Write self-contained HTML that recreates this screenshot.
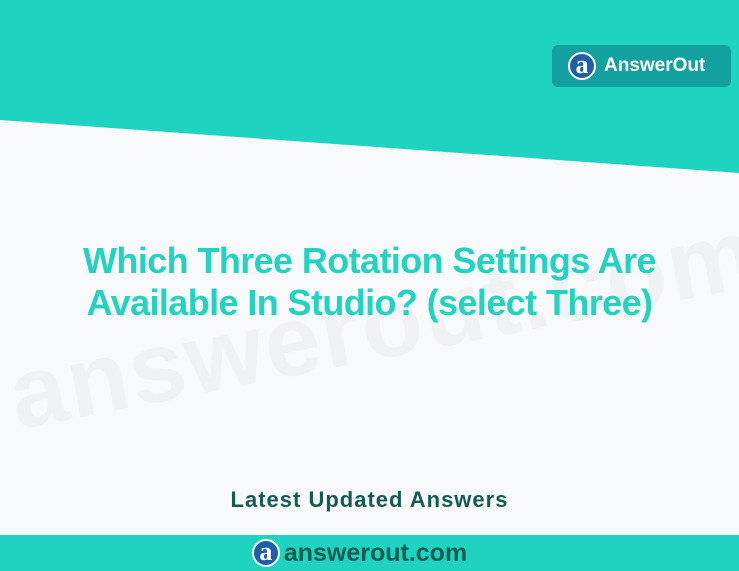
<!DOCTYPE html>
<html><head><meta charset="utf-8"><style>
*{margin:0;padding:0;box-sizing:border-box}
body{width:739px;height:571px;overflow:hidden;background:#f8f9fa;position:relative;font-family:"Liberation Sans",sans-serif}
.wm{position:absolute;left:0;font-size:100px;font-weight:bold;color:#f0f2f4;transform:rotate(-11deg);transform-origin:0 0;letter-spacing:2px;white-space:nowrap;top:340px}
.title{position:absolute;left:0;width:739px;top:240px;text-align:center;color:#22d3bf;font-size:36px;font-weight:bold;line-height:42px;letter-spacing:-0.6px}
.badge{position:absolute;left:552px;top:45px;width:179px;height:42px;background:#13a1a0;border-radius:6px;color:#fff;font-weight:bold;font-size:19px;display:flex;align-items:center;padding-left:16px}
.logo{width:28px;height:28px;border-radius:50%;background:#1f5fa8;border:2px solid #fff;color:#fff;font-family:"Liberation Serif",serif;font-size:26px;line-height:22px;text-align:center;margin-right:8px;flex:none}
.latest{position:absolute;left:0;width:739px;top:487px;text-align:center;color:#145c52;font-size:22px;font-weight:bold;letter-spacing:1px}
.bot{position:absolute;left:0;top:535px;width:739px;height:36px;background:#1ed3c0;display:flex;align-items:center;justify-content:center;color:#145c52;font-weight:bold;font-size:25px;padding-right:20px}
</style></head><body>
<svg style="position:absolute;left:0;top:0" width="739" height="571"><polygon points="0,0 739,0 739,173 0,120" fill="#1ed3c0"/></svg>
<div class="wm">answerout.com</div>
<div class="badge"><div class="logo">a</div>AnswerOut</div>
<div class="title">Which Three Rotation Settings Are<br>Available In Studio? (select Three)</div>
<div class="latest">Latest Updated Answers</div>
<div class="bot"><div class="logo" style="margin-right:4px">a</div>answerout.com</div>
</body></html>
